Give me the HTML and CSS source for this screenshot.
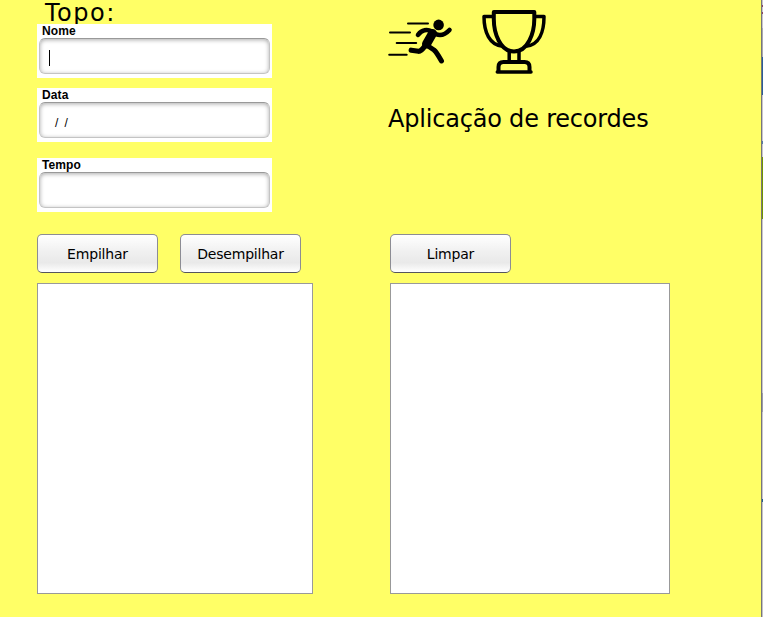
FILE: index.html
```html
<!DOCTYPE html>
<html lang="pt-BR">
<head>
<meta charset="utf-8">
<title>Aplicação de recordes</title>
<link rel="stylesheet" href="styles.css">
</head>
<body>
<div class="window">
  <main class="app">
    <section class="top">
      <div class="form">
        <div class="topo">Topo:</div>
        <div class="field"><span class="label">Nome</span><div class="input"><span class="caret"></span></div></div>
        <div class="field"><span class="label">Data</span><div class="input date">/&nbsp; /</div></div>
        <div class="field last"><span class="label">Tempo</span><div class="input"></div></div>
      </div>
      <header class="brand">
        <div class="icons">
          <svg class="runner" width="66" height="48" viewBox="0 0 66 48" fill="none" stroke="#000" stroke-linecap="round" stroke-linejoin="round">
            <path d="M20 7.500h20M2 16.500h20M8.700 27h19.500M1.200 38.800h17.500" stroke-width="2"/>
            <circle cx="50.600" cy="8.900" r="5.300" fill="#000" stroke="none"/>
            <path d="M30 18.800Q33 14.800 36.500 14.200Q40 13.300 44 15.500L48 18.200Q55 21 61.500 14" stroke-width="4.600"/>
            <path d="M44.500 17.500L38.500 28" stroke-width="9"/>
            <path d="M37.500 29Q33.500 35.300 30.500 35.300L23.200 34.200" stroke-width="5.200"/>
            <path d="M38.500 29L46 34Q48.500 36 53.500 45" stroke-width="5"/>
          </svg>
          <svg class="trophy" width="66" height="66" viewBox="0 0 66 66" fill="none" stroke="#000" stroke-width="4" stroke-linecap="round" stroke-linejoin="round">
            <path d="M12.800 3H53.300V10C53.300 24 47 42.500 33 42.500S12.800 24 12.800 10Z"/>
            <path d="M12 7.500H3C3 24 9 35.500 20.500 37M54.500 7.500H63C63 24 57.500 35.500 46 37" stroke-width="3.500"/>
            <path d="M28.200 43V53M38 43V53" stroke-width="3.500"/>
            <path d="M17.500 62V58Q17.500 53 22.500 53H43.500Q48.500 53 48.500 58V62"/>
            <path d="M16.300 63H50" stroke-width="3.500"/>
          </svg>
        </div>
        <h1>Aplicação de recordes</h1>
      </header>
    </section>
    <section class="stacks">
      <div class="stack">
        <div class="actions"><button>Empilhar</button><button>Desempilhar</button></div>
        <div class="list"></div>
      </div>
      <div class="stack records">
        <div class="actions"><button>Limpar</button></div>
        <div class="list"></div>
      </div>
    </section>
  </main>
  <div class="edge"></div>
</div>
</body>
</html>
```
FILE: styles.css
```css
* { box-sizing: border-box; }
body { margin: 0; overflow: hidden; font-family: "DejaVu Sans", sans-serif; color: #000; }
.window { display: flex; width: 763px; height: 617px; background: #ffff66; }
.app { width: 761px; flex: none; }
.edge {
  width: 2px;
  border-left: 1px solid #77777b;
  background: linear-gradient(#c9c5ca 0 5px, #8c4560 5px 7px, #c9c5ca 7px 12px, #8c4560 12px 14px, #c9c5ca 14px 28px, #aaa9ac 28px 57px, #2b5f94 57px 95px, #c9c5ca 95px 141px, #547ca5 141px 144px, #c9c5ca 144px 157px, #739500 157px 219px, #c9c5ca 219px 393px, #9c9ca7 393px 412px, #c9c5ca 412px 499px, #236084 499px 502px, #c4c2c4 502px);
}
.top { display: grid; grid-template-columns: 351px 1fr; padding-left: 37px; height: 234px; }
.topo { height: 24px; padding-left: 8px; font-size: 24px; line-height: 26px; letter-spacing: 1.5px; white-space: nowrap; }
.field { position: relative; width: 235px; height: 54px; margin-bottom: 10px; padding: 0 2px; background: #fff; font-family: "Liberation Sans", Arial, sans-serif; }
.field.last { margin-top: 16px; }
.label { display: block; height: 14px; padding-left: 3px; font-size: 12px; line-height: 14px; font-weight: bold; letter-spacing: .1px; }
.input {
  display: flex; align-items: center; width: 231px; height: 36px; padding: 4px 9px 0;
  border: 1px solid #c4c4c4; border-top-color: #999; border-radius: 6px;
  background: #fff; box-shadow: inset 0 1px 4px #aaa;
}
.date { padding-left: 15px; font-size: 12px; letter-spacing: -.2px; padding-top: 5px; }
.caret { width: 1px; height: 16px; background: #000; }
.icons { display: flex; gap: 27px; height: 80px; }
.runner { margin-top: 16px; }
.trophy { margin-top: 9px; }
h1 { margin: 25px 0 0; font-size: 24px; line-height: 28px; font-weight: 400; letter-spacing: -.2px; white-space: nowrap; }
.stacks { display: grid; grid-template-columns: 353px 280px; padding-left: 37px; }
.actions { display: flex; gap: 22px; height: 49px; }
button {
  width: 121px; height: 39px; padding: 1px 0 0; border: 1px solid #8c8c94; border-bottom-color: #55555d; border-radius: 5px;
  background: linear-gradient(#fff, #f0f0f0 45%, #e9e9e9 75%, #fff);
  color: #000; font: 14px "DejaVu Sans", sans-serif; letter-spacing: -.2px; white-space: nowrap;
}
.list { width: 276px; height: 311px; border: 1px solid #999; background: #fff; }
.records .list { width: 280px; }
```
